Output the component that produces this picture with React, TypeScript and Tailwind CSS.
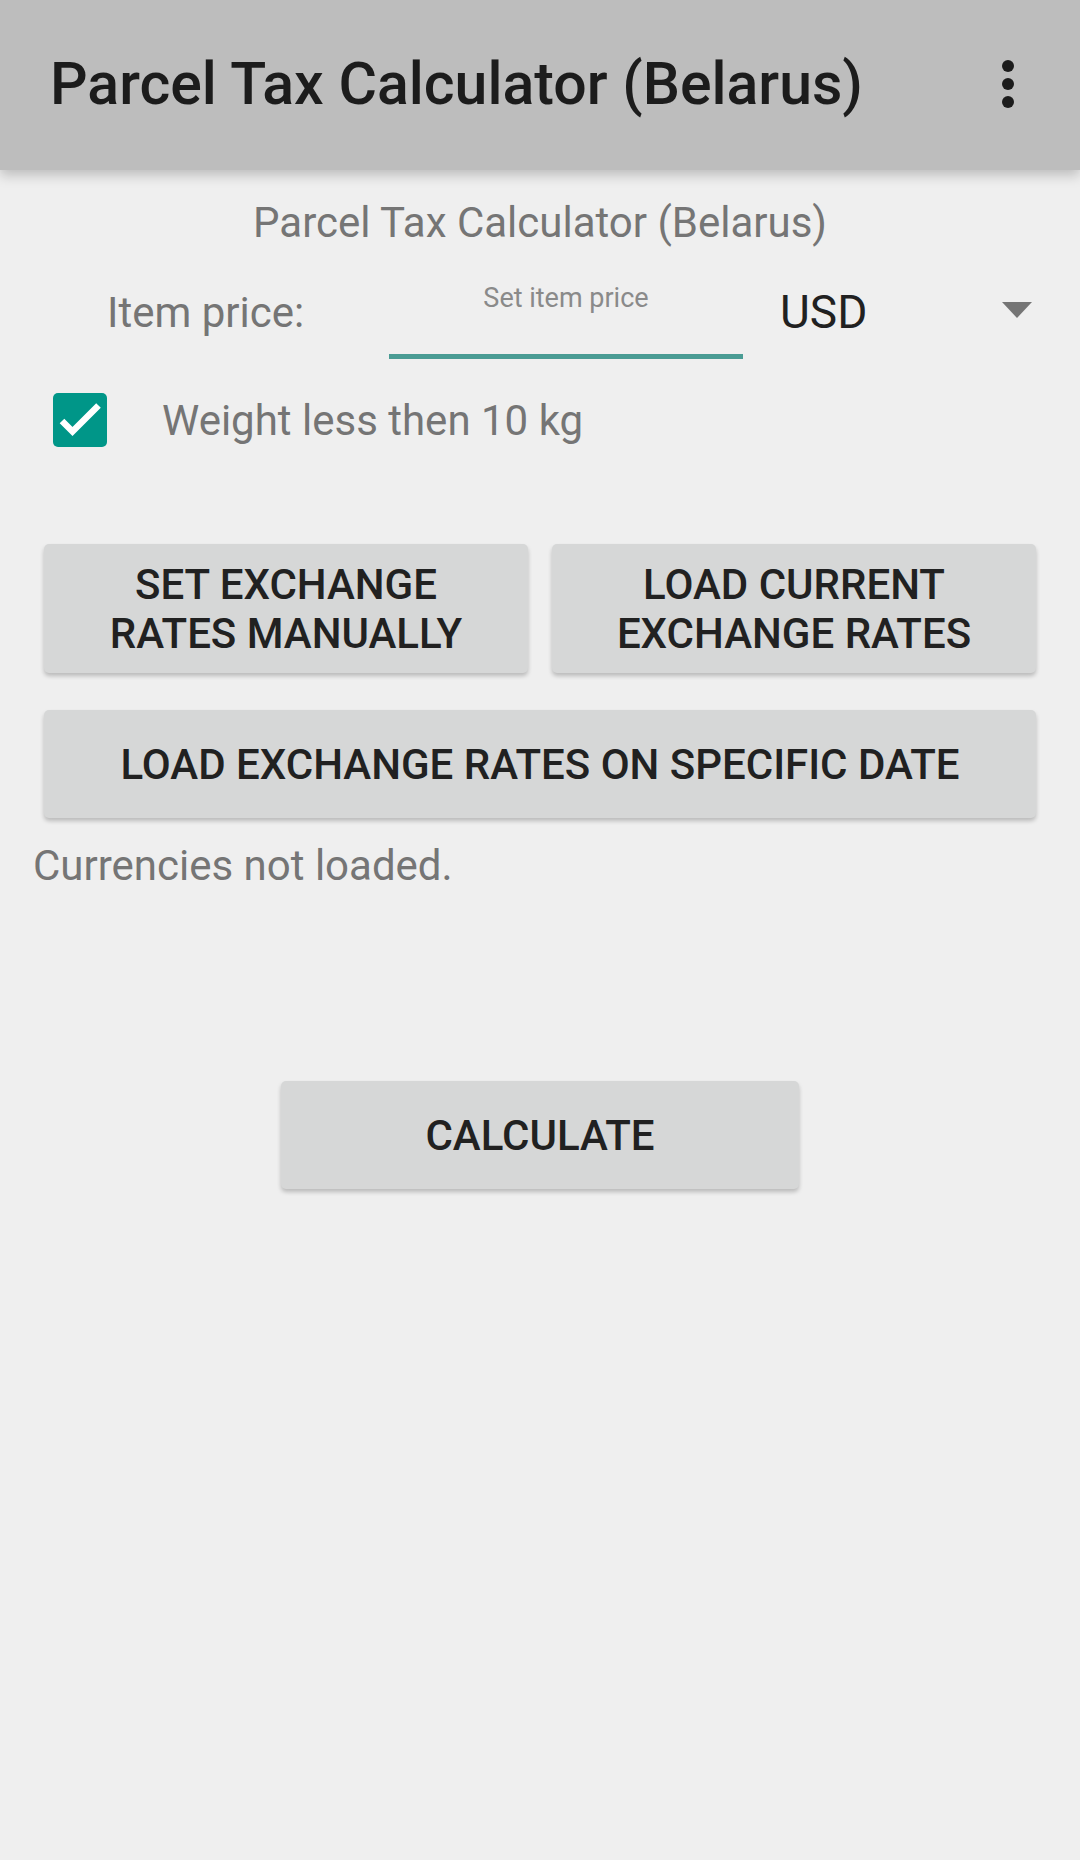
const font = { fontFamily: "Roboto, 'Noto Sans', sans-serif" };

const ActionButton = ({ lines, className }: { lines: string[]; className: string }) => (
  <button
    className={`flex flex-col items-center justify-center rounded-[5px] bg-[#d6d7d7] text-[42px] leading-[49px] font-medium text-[#212121] shadow-[0_3px_4px_rgba(0,0,0,0.22)] ${className}`}
  >
    {lines.map((l) => (
      <span key={l}>{l}</span>
    ))}
  </button>
);

export default function App() {
  return (
    <div className="min-h-[1860px] w-[1080px] bg-[#efefef] flex flex-col" style={font}>
      {/* Toolbar */}
      <header className="relative z-10 h-[170px] bg-[#bdbdbd] flex items-center justify-between pl-[50px] pr-[66px] shadow-[0_5px_12px_rgba(0,0,0,0.22)]">
        <h1 className="text-[59px] font-medium text-[#1c1c1c] leading-none pb-[4px]">
          Parcel Tax Calculator (Belarus)
        </h1>
        <div className="flex flex-col gap-[6px] pb-[3px]">
          <span className="w-[12px] h-[12px] rounded-full bg-[#1c1c1c]" />
          <span className="w-[12px] h-[12px] rounded-full bg-[#1c1c1c]" />
          <span className="w-[12px] h-[12px] rounded-full bg-[#1c1c1c]" />
        </div>
      </header>

      {/* Subtitle */}
      <p className="mt-[28px] text-center text-[42px] leading-[49px] text-[#757575]">
        Parcel Tax Calculator (Belarus)
      </p>

      {/* Item price row */}
      <div className="mt-[33px] h-[82px] flex items-start">
        <span className="ml-[107px] w-[282px] mt-[8px] text-[42px] leading-[49px] text-[#757575]">
          Item price:
        </span>
        <div className="w-[354px] flex flex-col">
          <span className="mt-[2px] text-center text-[27px] leading-[32px] text-[#8a8a8a]">
            Set item price
          </span>
          <div className="mt-[40px] h-[5px] bg-[#4a9c94]" />
        </div>
        <span className="ml-[37px] mt-[5px] text-[46px] leading-[54px] text-[#212121]">USD</span>
        <div className="flex-1" />
        <svg className="mt-[22px] mr-[48px]" width="30" height="16" viewBox="0 0 30 16">
          <polygon points="0,0 30,0 15,16" fill="#757575" />
        </svg>
      </div>

      {/* Checkbox row */}
      <div className="mt-[31px] flex items-start">
        <div className="ml-[53px] w-[54px] h-[54px] rounded-[5px] bg-[#009688] flex items-center justify-center">
          <svg width="54" height="54" viewBox="0 0 54 54">
            <path d="M9 28l10.5 10.5L45.5 12.5" fill="none" stroke="#ffffff" strokeWidth="6.5" />
          </svg>
        </div>
        <span className="ml-[55px] mt-[3px] text-[42px] leading-[49px] text-[#757575]">
          Weight less then 10 kg
        </span>
      </div>

      {/* Exchange rate buttons */}
      <div className="mt-[97px] px-[44px] grid grid-cols-2 gap-[24px]">
        <ActionButton className="h-[129px]" lines={["SET EXCHANGE", "RATES MANUALLY"]} />
        <ActionButton className="h-[129px]" lines={["LOAD CURRENT", "EXCHANGE RATES"]} />
      </div>
      <div className="mt-[37px] px-[44px]">
        <ActionButton className="w-full h-[108px]" lines={["LOAD EXCHANGE RATES ON SPECIFIC DATE"]} />
      </div>

      <p className="mt-[23px] ml-[33px] text-[42px] leading-[49px] text-[#757575]">
        Currencies not loaded.
      </p>

      <div className="mt-[191px] flex justify-center">
        <ActionButton className="w-[518px] h-[108px]" lines={["CALCULATE"]} />
      </div>
    </div>
  );
}
